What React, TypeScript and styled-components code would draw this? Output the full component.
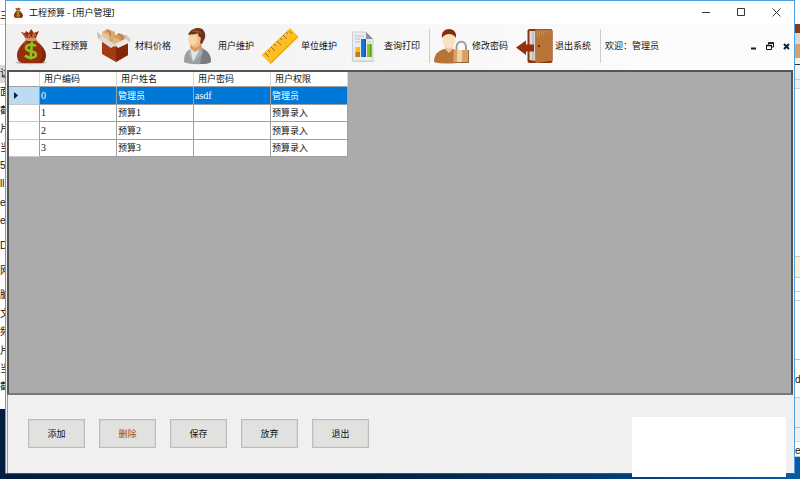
import React from "react";
import styled, { createGlobalStyle, css } from "styled-components";

const GlobalStyle = createGlobalStyle`
  *, *::before, *::after { box-sizing: border-box; }
  body {
    margin: 0;
    overflow: hidden;
    font: 9px/12px "Liberation Sans", "Noto Sans CJK SC", sans-serif;
    color: #111;
  }
  button { font: inherit; color: inherit; padding: 0; margin: 0; }
  svg { display: block; }
`;

const Desktop = styled.div`
  position: relative;
  min-height: 100vh;
  display: grid;
  grid-template-columns: 5px minmax(0, 1fr) 5px;
  grid-template-rows: minmax(0, 1fr) 5px;
  background: linear-gradient(90deg, #001f40 0%, #00203f 45%, #003a73 75%, #0a5aa3 100%);
`;

const Strip = styled.div`
  display: flex;
  flex-direction: column;
  overflow: hidden;
  white-space: nowrap;
`;

const Sliver = styled.div<{ $h: number; $bg?: string; $line?: string }>`
  flex: none;
  height: ${(p) => p.$h}px;
  background: ${(p) => p.$bg ?? "#fff"};
  border-bottom: ${(p) => (p.$line ? `1px solid ${p.$line}` : "0")};
  line-height: 18px;
  font-size: 10px;
`;

const Window = styled.main`
  display: flex;
  flex-direction: column;
  border: 1px solid #4f9fe3;
  border-bottom-color: #0b62b3;
  background: #f0f0f0;
`;

const TitleBar = styled.header`
  display: flex;
  align-items: center;
  height: 23px;
  padding-left: 7px;
  background: #fff;
`;

const Title = styled.h1`
  flex: 1;
  margin: 0 0 0 5px;
  font-size: 9px;
  font-weight: 400;
  font-family: "Noto Sans", "Noto Sans CJK SC", sans-serif;
`;

const CaptionButton = styled.button`
  display: grid;
  place-items: center;
  width: 35px;
  height: 22px;
  border: 0;
  background: transparent;
`;

const ToolBar = styled.nav`
  display: flex;
  align-items: center;
  height: 46px;
  padding: 0 0 2px 8px;
  background: linear-gradient(90deg, #f0f0f0, #fcfcfc 85%);
`;

const ToolButton = styled.button`
  display: flex;
  align-items: center;
  gap: 2px;
  width: 83px;
  height: 36px;
  border: 0;
  background: transparent;
  white-space: nowrap;
  svg { flex: none; overflow: visible; }
`;

const Separator = styled.span`
  width: 1px;
  height: 34px;
  margin-right: 4px;
  background: #cccccc;
`;

const Welcome = styled.span`
  flex: 1;
`;

const ChildButton = styled.button`
  display: grid;
  place-items: center;
  width: 16px;
  height: 16px;
  border: 0;
  background: transparent;
`;

const DataArea = styled.section`
  flex: 1;
  margin: 0 1px;
  border: 2px solid #555;
  border-bottom-color: #777;
  background: #ababab;
`;

const Table = styled.table`
  width: 339px;
  table-layout: fixed;
  border-collapse: separate;
  border-spacing: 0;
  background: #fff;
`;

const cell = css`
  padding: 0 0 0 1px;
  border-right: 1px solid #a0a0a0;
  border-bottom: 1px solid #a0a0a0;
  text-align: left;
  font-weight: 400;
  white-space: nowrap;
`;

const ColumnHead = styled.th<{ $w: number }>`
  ${cell}
  width: ${(p) => p.$w}px;
  height: 15px;
  padding-left: 4px;
  border-right-color: #d8d8d8;
`;

const Row = styled.tr<{ $selected: boolean }>`
  height: 18px;
  &:nth-child(even) { height: 17px; }
  color: ${(p) => (p.$selected ? "#fff" : "#111")};
  background: ${(p) => (p.$selected ? "#0078d7" : "#fff")};
`;

const RowHead = styled.th<{ $selected: boolean }>`
  ${cell}
  padding-left: 5px;
  border-bottom-color: #c8c8c8;
  background: ${(p) => (p.$selected ? "#bcdcf4" : "#fff")};
`;

const Cell = styled.td`
  ${cell}
`;

const Code = styled.span`
  font-family: "Liberation Serif", serif;
  font-size: 10px;
`;

const Footer = styled.footer`
  display: flex;
  gap: 14px;
  height: 78px;
  margin-left: 1px;
  padding: 24px 0 0 20px;
  border-left: 1px solid #999;
`;

const ActionButton = styled.button<{ $danger?: boolean }>`
  width: 57px;
  height: 29px;
  border: 1px solid #bcbcbc;
  box-shadow: inset 0 0 0 1px #d8d8d6;
  background: #e1e1e0;
  color: ${(p) => (p.$danger ? "#a34a00" : "#111")};
`;

const BlankNote = styled.div`
  position: absolute;
  right: 14px;
  bottom: 2px;
  width: 154px;
  height: 60px;
  background: #fff;
`;

const MoneyBag = ({ size = 36 }: { size?: number }) => (
  <svg width={size} height={size} viewBox="0 0 36 36" aria-hidden="true">
    <ellipse cx="17" cy="34.6" rx="16" ry="1.6" fill="#b9b9b9" />
    <path d="M12 12C8 16 3 21 3 27c0 5 2 8 6 8h16c5 0 7-3 7-8 0-6-6-11-10-15z" fill="#962e0b" />
    <path d="M28 19c4 5 5 13 0 16h-3c3-4 4-9 3-16z" fill="#7d2507" />
    <path d="M7 4l4 1 1-2 3 2 2-4 3 4 5-2-4 9h-8z" fill="#962e0b" />
    <path d="M9 5l5 6 1-5 2 5 3-6-1 6 3-5" fill="none" stroke="#cf8a55" strokeWidth="0.8" />
    <path d="M12 10h10l1 3H11z" fill="#d39a68" />
    <path d="M13 12l-3 4M21 12l4 4" stroke="#c06c3d" strokeWidth="1" />
    <path d="M22 18c-3-2-10-2-10 2 0 4.500 10 2 10 6.500 0 4-8 4-11 1M18 13.500l-1.500 18" fill="none" stroke="#8cc41f" strokeWidth="2.600" />
  </svg>
);

const MaterialBox = () => (
  <svg width="36" height="36" viewBox="0 0 36 36" aria-hidden="true">
    <path d="M4 10l11-4 16 5-12 9z" fill="#c9b8a8" />
    <path d="M5 4l6-3 7 3v9l-6 3-7-4z" fill="#d9a971" />
    <path d="M5 4l7 3v9l-7-4z" fill="#e8c597" />
    <path d="M16 9l6-4 7 3v7l-7 4-6-3z" fill="#cf9b60" />
    <path d="M16 9l7 3v7l-7-3z" fill="#e1b781" />
    <path d="M9 2l4 2v4M21 6l4 2v4" stroke="#a76b36" fill="none" />
    <path d="M5 13l14 6 12-6v14l-12 7-14-8z" fill="#a33a12" />
    <path d="M19 19l12-6v14l-12 7z" fill="#842706" />
    <path d="M0 4l5 4 14 9-5 3L1 11z" fill="#dedbd8" />
    <path d="M0 4l5 4-4 3z" fill="#c4c0bc" />
    <path d="M18 16l12-6 4 4-13 6z" fill="#eceae7" />
    <path d="M29 6l5 6-2 2-4-4z" fill="#cfcbc7" />
  </svg>
);

const Person = () => (
  <svg width="36" height="36" viewBox="0 0 36 36" aria-hidden="true">
    <path d="M4 34c0-9 3-12 9-14h9c6 3 9 7 9 14-6 3-21 3-27 0z" fill="#999da0" />
    <path d="M23 21c6 3 8 7 8 13-3 2-7 2-11 2z" fill="#777c80" />
    <path d="M10 21l3 13 7-13-4-2z" fill="#dfe5ea" />
    <path d="M10 21l-2 5 5 9zM20 21l3 4-10 10z" fill="#aaaeb2" />
    <path d="M11 14h10l1 6-7 4-5-4z" fill="#d79a62" />
    <ellipse cx="15" cy="11" rx="6.500" ry="8.500" fill="#efbd86" />
    <ellipse cx="13" cy="11" rx="4" ry="6" fill="#f9d6a8" />
    <path d="M8 7c2-5 6-7 10-7 6 0 8 5 7 10l-3 6-2-1 1-5c-2-1-3-3-3-5-3 2-7 1-10 2z" fill="#6b351c" />
    <path d="M11 4c4-3 9-2 11 2-4-2-7-2-11-2z" fill="#a54a25" />
  </svg>
);

const Ruler = () => (
  <svg width="36" height="36" viewBox="0 0 36 36" aria-hidden="true">
    <path d="M27 0l8.500 8.700L7.700 36-1.300 27z" fill="#fbc01f" />
    <path d="M35.500 8.700L7.700 36l-1-1L34.500 7.700z" fill="#e8ab12" />
    <path d="M2 25l4 4M5 22l2 2M8 19l4 4M11 16l2 2M14 13l4 4M17 10l2 2M20 7l4 4M23 4l2 2M26 3l3 3" stroke="#b0652c" />
  </svg>
);

const Report = () => (
  <svg width="36" height="36" viewBox="0 0 36 36" aria-hidden="true">
    <ellipse cx="17" cy="33" rx="12.500" ry="1.200" fill="#cfcfcf" />
    <path d="M6.500 4H20l7 7v22H6.500z" fill="#e9ebee" stroke="#cdd0d3" />
    <path d="M20 4l7 7h-7z" fill="#8d9195" />
    <path d="M9 8h9M9 11h5M9 14h5M21 14h4" stroke="#bcc0c5" />
    <path d="M9.500 19H14v10H9.500z" fill="#fbb917" />
    <path d="M9.500 24H14v5H9.500z" fill="#c97a12" />
    <path d="M15 11h5v18h-5z" fill="#1877d0" />
    <path d="M18.500 11H20v18h-1.500z" fill="#0d58a6" />
    <path d="M21 16h4.500v13H21z" fill="#86c522" />
    <path d="M24 16h1.500v13H24z" fill="#5e9b10" />
  </svg>
);

const UserLock = () => (
  <svg width="36" height="36" viewBox="0 0 36 36" aria-hidden="true">
    <path d="M0 34c0-8 4-11 10-13h9c5 2 8 6 8 13-7 2-21 2-27 0z" fill="#b87437" />
    <path d="M11 17h8v4l-4 4-4-4z" fill="#e9c89d" />
    <ellipse cx="15" cy="12" rx="6.300" ry="8.500" fill="#f7e1c0" />
    <path d="M8 10C7 4 11 1 15 1s8 3 7 9c-2-3-4-4-7-4-3 0-5 1-7 4z" fill="#8a2c0c" />
    <path d="M22.500 24v-5c0-7 9.500-7 9.500 0v5" fill="none" stroke="#9b9ea1" strokeWidth="2" />
    <rect x="19.500" y="22" width="15.500" height="13" rx="1" fill="#d6a26a" />
    <path d="M23 22h5v13h-5z" fill="#f0d3ab" />
    <path d="M20 34.500h15M34.500 22v13" stroke="#99683a" />
  </svg>
);

const ExitDoor = () => (
  <svg width="36" height="36" viewBox="0 0 36 36" aria-hidden="true">
    <rect x="10.500" y="1" width="25" height="34" rx="2" fill="#8c3510" />
    <path d="M12.500 3h6v30l-6-1z" fill="#d8dadc" />
    <path d="M15.500 3h1v29h-1z" fill="#a6a9ac" />
    <path d="M18 3c0-1 1-1.500 2-1.500h13c1.500 0 2.500 1 2.500 2v28c0 1-1 1.500-2 1.500l-15 2z" fill="#b87538" />
    <path d="M20 4h11M20 6h8M20 8h4" stroke="#d2a069" strokeDasharray="1 1" />
    <circle cx="22" cy="18" r="1.200" fill="#842706" />
    <path d="M-1 19.500L9 12.500v4h8v7H9V27z" fill="#982f0a" />
  </svg>
);

const tools = [
  { label: "工程预算", Icon: MoneyBag },
  { label: "材料价格", Icon: MaterialBox },
  { label: "用户维护", Icon: Person },
  { label: "单位维护", Icon: Ruler },
  { label: "查询打印", Icon: Report },
];

const sessionTools = [
  { label: "修改密码", Icon: UserLock },
  { label: "退出系统", Icon: ExitDoor },
];

const columns = ["用户编码", "用户姓名", "用户密码", "用户权限"];

const users = [
  { code: "0", name: "管理员", num: "", password: "asdf", role: "管理员" },
  { code: "1", name: "预算", num: "1", password: "", role: "预算录入" },
  { code: "2", name: "预算", num: "2", password: "", role: "预算录入" },
  { code: "3", name: "预算", num: "3", password: "", role: "预算录入" },
];

const actions = ["添加", "删除", "保存", "放弃", "退出"];

type SliverData = { h: number; text?: string; bg?: string; line?: string };

const leftSlivers: SliverData[] = [
  { h: 7 },
  { h: 18, text: "三", line: "#e4e4e4" },
  { h: 40 },
  { h: 18, text: "访", bg: "#d9d9d9" },
  { h: 19, text: "面" },
  { h: 18, text: "截" },
  { h: 19, text: "片" },
  { h: 18, text: "当" },
  { h: 18, text: "52" },
  { h: 19, text: "ll" },
  { h: 18, text: "eF" },
  { h: 25, text: "e" },
  { h: 25, text: "D" },
  { h: 24, text: "网" },
  { h: 19, text: "脑" },
  { h: 18, text: "文" },
  { h: 19, text: "频" },
  { h: 18, text: "片" },
  { h: 18, text: "当" },
  { h: 31, text: "截" },
];

const rightSlivers: SliverData[] = [
  { h: 24 },
  { h: 9, bg: "#8a3a18" },
  { h: 11, bg: "#d9d9d9" },
  { h: 14, bg: "#d6a26a" },
  { h: 7, bg: "#f0f0f0", line: "#333" },
  { h: 15, bg: "#f3f3f3", line: "#d0d0d0" },
  { h: 9, bg: "#f0f0f0", line: "#d0d0d0" },
  { h: 168, line: "#e8c88f" },
  { h: 21, bg: "#fcf0dc", line: "#e8c88f" },
  { h: 14, line: "#d6d6d6" },
  { h: 9, line: "#d6d6d6" },
  { h: 59, line: "#c0c0c0" },
  { h: 11 },
  { h: 27, text: "di", line: "#c4c4c4" },
  { h: 30, bg: "#f0f0f0", line: "#c4c4c4" },
  { h: 14, bg: "#f0f0f0", line: "#d8d8d8" },
  { h: 15, text: "et", line: "#c4c4c4" },
];

const BackgroundStrip = ({ items }: { items: SliverData[] }) => (
  <Strip aria-hidden="true">
    {items.map((s, i) => (
      <Sliver key={i} $h={s.h} $bg={s.bg} $line={s.line}>{s.text}</Sliver>
    ))}
  </Strip>
);

export default function App() {
  return (
    <>
      <GlobalStyle />
      <Desktop>
        <BackgroundStrip items={leftSlivers} />
        <Window>
          <TitleBar>
            <MoneyBag size={11} />
            <Title>工程预算 - [用户管理]</Title>
            <CaptionButton aria-label="最小化">
              <svg width="9" height="9"><path d="M0 4.500h8" stroke="#333" /></svg>
            </CaptionButton>
            <CaptionButton aria-label="最大化">
              <svg width="9" height="9"><path d="M.5.5h7v7h-7z" fill="none" stroke="#333" /></svg>
            </CaptionButton>
            <CaptionButton aria-label="关闭">
              <svg width="9" height="9"><path d="M.5.5l8 8M8.500.5l-8 8" stroke="#333" /></svg>
            </CaptionButton>
          </TitleBar>
          <ToolBar aria-label="工具栏">
            {tools.map(({ label, Icon }) => (
              <ToolButton key={label}><Icon />{label}</ToolButton>
            ))}
            <Separator />
            {sessionTools.map(({ label, Icon }) => (
              <ToolButton key={label}><Icon />{label}</ToolButton>
            ))}
            <Separator />
            <Welcome>欢迎：管理员</Welcome>
            <ChildButton aria-label="最小化子窗口">
              <svg width="6" height="8"><path d="M0 6.500h5" stroke="#0b2036" strokeWidth="2" /></svg>
            </ChildButton>
            <ChildButton aria-label="还原子窗口">
              <svg width="8" height="8">
                <path d="M2.500 2.500V1h5v4H6M.5 3.500h5v4h-5z" fill="none" stroke="#111" />
                <path d="M2 1h6M0 3.500h6" stroke="#111" strokeWidth="1.500" />
              </svg>
            </ChildButton>
            <ChildButton aria-label="关闭子窗口">
              <svg width="7" height="7"><path d="M1 1l5 5M6 1L1 6" stroke="#0b2036" strokeWidth="2" /></svg>
            </ChildButton>
          </ToolBar>
          <DataArea>
            <Table aria-label="用户管理">
              <thead>
                <tr>
                  <ColumnHead $w={31} aria-label="当前行" />
                  {columns.map((c) => (
                    <ColumnHead key={c} $w={77} scope="col">{c}</ColumnHead>
                  ))}
                </tr>
              </thead>
              <tbody>
                {users.map((u, i) => (
                  <Row key={u.code} $selected={i === 0}>
                    <RowHead $selected={i === 0} scope="row" aria-label={u.code}>
                      {i === 0 && (
                        <svg width="4" height="7"><path d="M0 0l4 3.500L0 7z" fill="#0b2036" /></svg>
                      )}
                    </RowHead>
                    <Cell><Code>{u.code}</Code></Cell>
                    <Cell>{u.name}<Code>{u.num}</Code></Cell>
                    <Cell><Code>{u.password}</Code></Cell>
                    <Cell>{u.role}</Cell>
                  </Row>
                ))}
              </tbody>
            </Table>
          </DataArea>
          <Footer>
            {actions.map((a) => (
              <ActionButton key={a} $danger={a === "删除"}>{a}</ActionButton>
            ))}
          </Footer>
        </Window>
        <BackgroundStrip items={rightSlivers} />
        <BlankNote />
      </Desktop>
    </>
  );
}
